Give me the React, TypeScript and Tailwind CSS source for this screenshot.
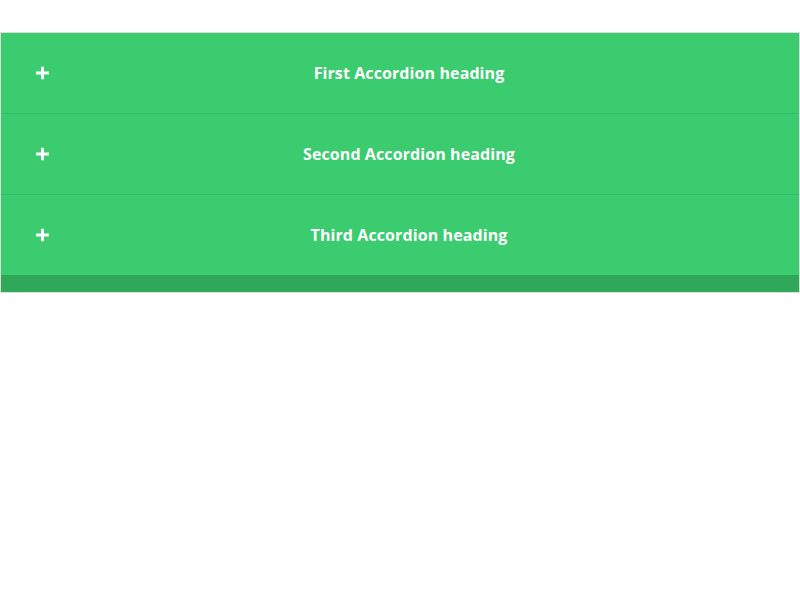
import React, { useState } from 'react';

const ITEMS = ['First Accordion heading', 'Second Accordion heading', 'Third Accordion heading'];

export default function App() {
  const [open, setOpen] = useState<number | null>(null);

  return (
    <div className="min-h-screen bg-white pt-8" style={{ fontFamily: '"Open Sans", sans-serif' }}>
      <div className="border border-[#dcdcdc] bg-[#2fa85a]">
        {ITEMS.map((label, i) => (
          <div key={label} className={i < ITEMS.length - 1 ? 'border-b border-[#35bd66]' : ''}>
            <button
              onClick={() => setOpen(open === i ? null : i)}
              className="relative flex h-20 w-full items-center bg-[#3acc6f] pl-[18px] text-white"
            >
              <span className="absolute left-[35px] top-1/2 -translate-y-1/2">
                <svg width="13" height="13" viewBox="0 0 13 13">
                  <rect x="5" y="0" width="3" height="13" fill="#fff" />
                  <rect x="0" y="5" width="13" height="3" fill="#fff" />
                </svg>
              </span>
              <span className="flex-1 text-center text-[16px] font-bold tracking-[0.1px]">{label}</span>
            </button>
            {open === i && (
              <div className="bg-white px-9 py-4 text-sm text-gray-600">Accordion content</div>
            )}
          </div>
        ))}
        <div className="h-[17px]" />
      </div>
    </div>
  );
}
